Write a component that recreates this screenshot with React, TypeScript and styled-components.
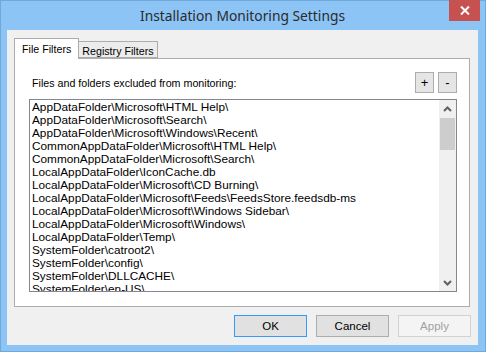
import React from 'react'
import styled, { createGlobalStyle } from 'styled-components'

const uiFont = `'Liberation Sans', 'DejaVu Sans', sans-serif`

const GlobalStyle = createGlobalStyle`
  html, body {
    margin: 0;
    padding: 0;
    background: #ffffff;
  }
  * {
    box-sizing: border-box;
  }
`

const excluded = [
  'AppDataFolder\\Microsoft\\HTML Help\\',
  'AppDataFolder\\Microsoft\\Search\\',
  'AppDataFolder\\Microsoft\\Windows\\Recent\\',
  'CommonAppDataFolder\\Microsoft\\HTML Help\\',
  'CommonAppDataFolder\\Microsoft\\Search\\',
  'LocalAppDataFolder\\IconCache.db',
  'LocalAppDataFolder\\Microsoft\\CD Burning\\',
  'LocalAppDataFolder\\Microsoft\\Feeds\\FeedsStore.feedsdb-ms',
  'LocalAppDataFolder\\Microsoft\\Windows Sidebar\\',
  'LocalAppDataFolder\\Microsoft\\Windows\\',
  'LocalAppDataFolder\\Temp\\',
  'SystemFolder\\catroot2\\',
  'SystemFolder\\config\\',
  'SystemFolder\\DLLCACHE\\',
  'SystemFolder\\en-US\\',
]

function Chevron({ up }: { up?: boolean }) {
  return (
    <svg width="9" height="6" viewBox="0 0 9 6">
      <path
        d={up ? 'M1 5 L4.5 1.5 L8 5' : 'M1 1 L4.5 4.5 L8 1'}
        fill="none"
        stroke="#606060"
        strokeWidth="2"
      />
    </svg>
  )
}

export default function App() {
  return (
    <>
      <GlobalStyle />
      <Window>
        <TitleBar>
          <Title>Installation Monitoring Settings</Title>
          <CloseButton>
            <svg width="10" height="9" viewBox="0 0 10 9">
              <path d="M1 0.5 L9 8.5 M9 0.5 L1 8.5" stroke="#ffffff" strokeWidth="2" />
            </svg>
          </CloseButton>
        </TitleBar>
        <Client>
          <Tabs>
            <Tab active>File Filters</Tab>
            <Tab>Registry Filters</Tab>
          </Tabs>
          <Panel>
            <HeaderRow>
              <Label>Files and folders excluded from monitoring:</Label>
              <SmallButtons>
                <SmallButton>+</SmallButton>
                <SmallButton>-</SmallButton>
              </SmallButtons>
            </HeaderRow>
            <ListBox>
              <Items>
                {excluded.map((path) => (
                  <Item key={path}>{path}</Item>
                ))}
              </Items>
              <ScrollBar>
                <Arrow><Chevron up /></Arrow>
                <Track>
                  <Thumb />
                </Track>
                <Arrow><Chevron /></Arrow>
              </ScrollBar>
            </ListBox>
          </Panel>
          <Footer>
            <DialogButton primary>OK</DialogButton>
            <DialogButton>Cancel</DialogButton>
            <DialogButton disabled>Apply</DialogButton>
          </Footer>
        </Client>
      </Window>
    </>
  )
}

const Window = styled.div`
  width: 486px;
  height: 352px;
  background: #8bc4f5;
  border: 1px solid #6fa9dc;
  display: flex;
  flex-direction: column;
  padding: 0 7px 6px 6px;
`

const TitleBar = styled.div`
  height: 29px;
  position: relative;
  display: flex;
  align-items: center;
  justify-content: center;
`

const Title = styled.div`
  font-family: 'Noto Sans', 'Open Sans', sans-serif;
  font-size: 13.8px;
  color: #2b2b2b;
  padding-bottom: 1px;
`

const CloseButton = styled.div`
  position: absolute;
  top: -1px;
  right: -2px;
  width: 31px;
  height: 21px;
  background: #c75050;
  display: flex;
  align-items: center;
  justify-content: center;
`

const Client = styled.div`
  flex: 1;
  background: #f0f0f0;
  padding: 8px 7px 0 7px;
  display: flex;
  flex-direction: column;
  font-family: ${uiFont};
  font-size: 11px;
  color: #000000;
`

const Tabs = styled.div`
  display: flex;
  align-items: flex-end;
  height: 20px;
  position: relative;
  z-index: 1;
`

const Tab = styled.div<{ active?: boolean }>`
  height: ${(p) => (p.active ? '21px' : '17px')};
  margin-bottom: ${(p) => (p.active ? '-1px' : '0')};
  padding: ${(p) => (p.active ? '0 7px' : '0 3px')};
  padding-top: ${(p) => (p.active ? '0' : '2px')};
  background: ${(p) => (p.active ? '#ffffff' : '#ececec')};
  border: 1px solid #acacac;
  border-bottom: ${(p) => (p.active ? 'none' : '1px solid #acacac')};
  border-left: ${(p) => (p.active ? '1px solid #acacac' : 'none')};
  display: flex;
  align-items: center;
  font-size: 10.7px;
  white-space: nowrap;
`

const Panel = styled.div`
  height: 249px;
  background: #ffffff;
  border: 1px solid #acacac;
  margin-right: 1px;
  padding: 13px 12px 0 14px;
  display: flex;
  flex-direction: column;
  gap: 6px;
`

const HeaderRow = styled.div`
  display: flex;
  align-items: center;
  justify-content: space-between;
  height: 21px;
  padding-left: 3px;
`

const Label = styled.div`
  font-size: 10.7px;
  padding-top: 1px;
`

const SmallButtons = styled.div`
  display: flex;
  gap: 4px;
`

const SmallButton = styled.div`
  width: 19px;
  height: 21px;
  background: #e5e5e5;
  border: 1px solid #adadad;
  display: flex;
  align-items: center;
  justify-content: center;
  font-size: 13px;
  color: #000000;
`

const ListBox = styled.div`
  height: 193px;
  border: 1px solid #828790;
  background: #ffffff;
  display: flex;
  overflow: hidden;
`

const Items = styled.div`
  flex: 1;
  padding: 1px 2px 0 2px;
  overflow: hidden;
`

const Item = styled.div`
  height: 13px;
  line-height: 13px;
  font-size: 11.8px;
  white-space: nowrap;
`

const ScrollBar = styled.div`
  width: 17px;
  background: #f0f0f0;
  display: flex;
  flex-direction: column;
`

const Arrow = styled.div`
  height: 17px;
  display: flex;
  align-items: center;
  justify-content: center;
`

const Track = styled.div`
  flex: 1;
  padding: 1px 1px;
`

const Thumb = styled.div`
  height: 32px;
  background: #cdcdcd;
`

const Footer = styled.div`
  display: flex;
  justify-content: flex-end;
  gap: 9px;
  margin-top: 8px;
`

const DialogButton = styled.div<{ primary?: boolean; disabled?: boolean }>`
  width: 73px;
  height: 22px;
  display: flex;
  align-items: center;
  justify-content: center;
  font-size: 11.5px;
  background: ${(p) => (p.disabled ? '#f4f4f4' : '#e1e1e1')};
  border: 1px solid ${(p) => (p.primary ? '#3399ff' : p.disabled ? '#d2d2d2' : '#adadad')};
  color: ${(p) => (p.disabled ? '#a0a0a0' : '#000000')};
`
